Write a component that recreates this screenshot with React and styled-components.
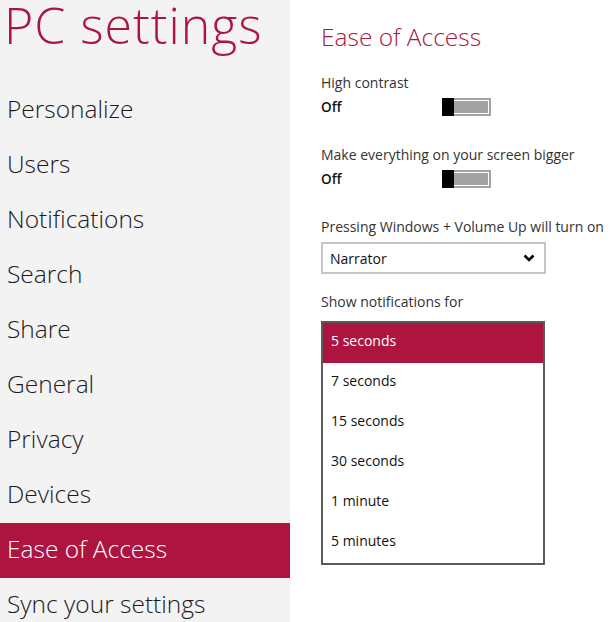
import React from "react";
import styled, { createGlobalStyle } from "styled-components";

const accent = "#ad1440";

const Global = createGlobalStyle`
  html, body { margin: 0; padding: 0; background: #fff; }
  body { font-family: "Open Sans", "Noto Sans", sans-serif; overflow: hidden; }
  * { box-sizing: border-box; }
`;

const Page = styled.div`
  display: flex;
  width: 613px;
  height: 622px;
  overflow: hidden;
`;

const Sidebar = styled.nav`
  width: 290px;
  flex: none;
  background: #f3f3f3;
  display: flex;
  flex-direction: column;
`;

const Title = styled.h1`
  flex: none;
  margin: 0;
  height: 83px;
  padding-left: 4px;
  font-weight: 300;
  font-size: 50px;
  line-height: 51px;
  color: ${accent};
  letter-spacing: 1px;
  white-space: nowrap;
`;

const NavItem = styled.div`
  height: 55px;
  flex: none;
  display: flex;
  align-items: center;
  padding: 0 0 4px 7px;
  font-weight: 300;
  font-size: 24.5px;
  color: ${(p) => (p.$active ? "#fff" : "#1a1a1a")};
  background: ${(p) => (p.$active ? accent : "transparent")};
  white-space: nowrap;
`;

const Main = styled.main`
  flex: 1;
  padding: 20px 0 0 31px;
  display: flex;
  flex-direction: column;
  color: #333;
`;

const Heading = styled.h2`
  margin: 0 0 19px;
  font-weight: 300;
  font-size: 24.5px;
  line-height: 34px;
  color: ${accent};
  white-space: nowrap;
`;

const Label = styled.div`
  font-size: 14px;
  line-height: 20px;
  color: #333;
  white-space: nowrap;
`;

const ToggleRow = styled.div`
  display: flex;
  align-items: center;
  height: 28px;
  margin-bottom: 24px;
`;

const State = styled.span`
  width: 121px;
  font-size: 13.5px;
  font-weight: 600;
  color: #111;
`;

const Track = styled.div`
  position: relative;
  width: 49px;
  height: 18px;
  background: #a2a2a2;
  &::after {
    content: "";
    position: absolute;
    left: 2px;
    top: 2px;
    right: 2px;
    bottom: 2px;
    border: 1px solid #fff;
  }
`;

const Thumb = styled.div`
  position: absolute;
  left: 0;
  top: 0;
  width: 12px;
  height: 18px;
  background: #000;
  z-index: 1;
`;

const Select = styled.div`
  margin: 5px 0 18px;
  width: 225px;
  height: 32px;
  border: 2px solid #c6c6c6;
  display: flex;
  align-items: center;
  justify-content: space-between;
  padding: 0 9px 0 7px;
  font-size: 14px;
  color: #111;
`;

const List = styled.div`
  margin-top: 9px;
  width: 224px;
  border: 2px solid #5a5a5a;
  display: flex;
  flex-direction: column;
`;

const Option = styled.div`
  height: 40px;
  display: flex;
  align-items: center;
  padding: 0 0 5px 8px;
  font-size: 14px;
  color: ${(p) => (p.$selected ? "#fff" : "#111")};
  background: ${(p) => (p.$selected ? accent : "#fff")};
`;

const Toggle = () => (
  <Track>
    <Thumb />
  </Track>
);

const navItems = [
  "Personalize",
  "Users",
  "Notifications",
  "Search",
  "Share",
  "General",
  "Privacy",
  "Devices",
  "Ease of Access",
  "Sync your settings",
];

const options = ["5 seconds", "7 seconds", "15 seconds", "30 seconds", "1 minute", "5 minutes"];

export default function App() {
  return (
    <Page>
      <Global />
      <Sidebar>
        <Title>PC settings</Title>
        {navItems.map((n) => (
          <NavItem key={n} $active={n === "Ease of Access"}>
            {n}
          </NavItem>
        ))}
      </Sidebar>
      <Main>
        <Heading>Ease of Access</Heading>
        <Label>High contrast</Label>
        <ToggleRow>
          <State>Off</State>
          <Toggle />
        </ToggleRow>
        <Label>Make everything on your screen bigger</Label>
        <ToggleRow>
          <State>Off</State>
          <Toggle />
        </ToggleRow>
        <Label>Pressing Windows + Volume Up will turn on</Label>
        <Select>
          <span>Narrator</span>
          <svg width="12" height="8" viewBox="0 0 12 8">
            <path d="M1.5 1.5 L6 6 L10.5 1.5" fill="none" stroke="#000" strokeWidth="2.6" />
          </svg>
        </Select>
        <Label>Show notifications for</Label>
        <List>
          {options.map((o, i) => (
            <Option key={o} $selected={i === 0}>
              {o}
            </Option>
          ))}
        </List>
      </Main>
    </Page>
  );
}
